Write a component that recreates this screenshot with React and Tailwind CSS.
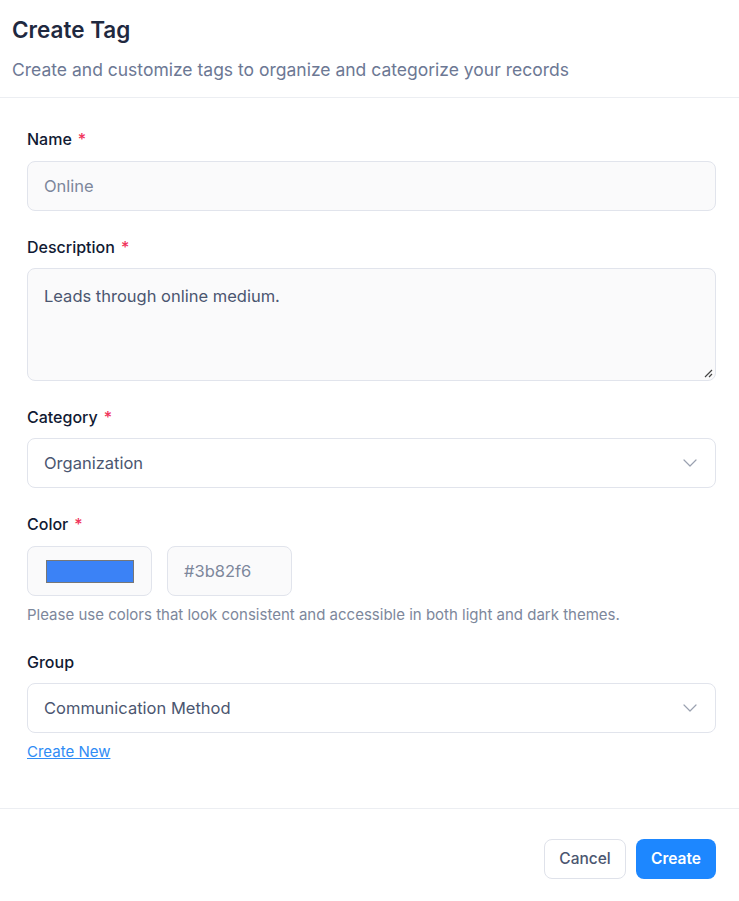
import { ChevronDown } from "lucide-react";

function Label({ children, required }) {
  return (
    <label className="block text-[16px] leading-[22px] font-medium text-[#111a33]">
      {children}
      {required && <span className="ml-[6px] text-[#f0325a]">*</span>}
    </label>
  );
}

function Select({ value }) {
  return (
    <div className="flex items-center justify-between h-[50px] pl-4 pr-[13px] rounded-lg border border-[#e1e4ec] bg-white">
      <span className="text-[16.5px] text-[#4b5670]">{value}</span>
      <ChevronDown className="w-6 h-6 text-[#9aa1b0]" strokeWidth={1.2} />
    </div>
  );
}

export default function App() {
  return (
    <div className="w-[739px] h-[901px] bg-white flex flex-col" style={{ fontFamily: "Inter, 'Noto Sans', sans-serif" }}>
      {/* Header */}
      <div className="px-3 pt-4 pb-[15px] border-b border-[#eceef2]">
        <h1 className="text-[22.5px] leading-[28px] font-semibold text-[#1f2940]">Create Tag</h1>
        <p className="mt-[14px] text-[17.5px] leading-[24px] text-[#6c7894]">
          Create and customize tags to organize and categorize your records
        </p>
      </div>

      {/* Body */}
      <div className="pl-[27px] pr-[23px] pt-[30px] pb-[45px] border-b border-[#eceef2]">
        <Label required>Name</Label>
        <div className="mt-[11px] flex items-center h-[50px] px-4 rounded-lg border border-[#e1e4ec] bg-[#fafafb]">
          <span className="text-[16.5px] text-[#7d879b]">Online</span>
        </div>

        <div className="mt-[25px]">
          <Label required>Description</Label>
          <div className="relative mt-[10px] h-[113px] px-4 pt-[15px] rounded-lg border border-[#e1e4ec] bg-[#fafafb]">
            <span className="text-[16.5px] leading-[24px] text-[#4b5670]">Leads through online medium.</span>
            <svg className="absolute right-[2px] bottom-[2px]" width="9" height="9" viewBox="0 0 9 9">
              <path d="M8 1L1 8M8 5L5 8" stroke="#444" strokeWidth="1.2" />
            </svg>
          </div>
        </div>

        <div className="mt-[25px]">
          <Label required>Category</Label>
          <div className="mt-[10px]">
            <Select value="Organization" />
          </div>
        </div>

        <div className="mt-[25px]">
          <Label required>Color</Label>
          <div className="mt-[11px] flex gap-[15px]">
            <div className="w-[125px] h-[50px] flex items-center justify-center rounded-lg border border-[#e1e4ec] bg-[#fafafb]">
              <div className="w-[88px] h-[23px] bg-[#3b82f6] border border-[#777]" />
            </div>
            <div className="w-[125px] h-[50px] flex items-center px-4 rounded-lg border border-[#e1e4ec] bg-[#fafafb]">
              <span className="text-[16.5px] text-[#7d879b]">#3b82f6</span>
            </div>
          </div>
          <p className="mt-[9px] text-[15px] leading-[20px] text-[#7d879b]">
            Please use colors that look consistent and accessible in both light and dark themes.
          </p>
        </div>

        <div className="mt-[26px]">
          <Label>Group</Label>
          <div className="mt-[10px]">
            <Select value="Communication Method" />
          </div>
          <a href="#" className="inline-block mt-[9px] text-[15px] leading-[20px] text-[#2f8cf5] underline">
            Create New
          </a>
        </div>
      </div>

      {/* Footer */}
      <div className="flex justify-end gap-[10px] pr-[23px] pt-[30px]">
        <button className="w-[82px] h-[40px] rounded-lg border border-[#dfe2ea] bg-white text-[15.5px] font-medium text-[#4b5670]">
          Cancel
        </button>
        <button className="w-[80px] h-[40px] rounded-lg bg-[#1d87ff] text-[15.5px] font-semibold text-white">
          Create
        </button>
      </div>
    </div>
  );
}
